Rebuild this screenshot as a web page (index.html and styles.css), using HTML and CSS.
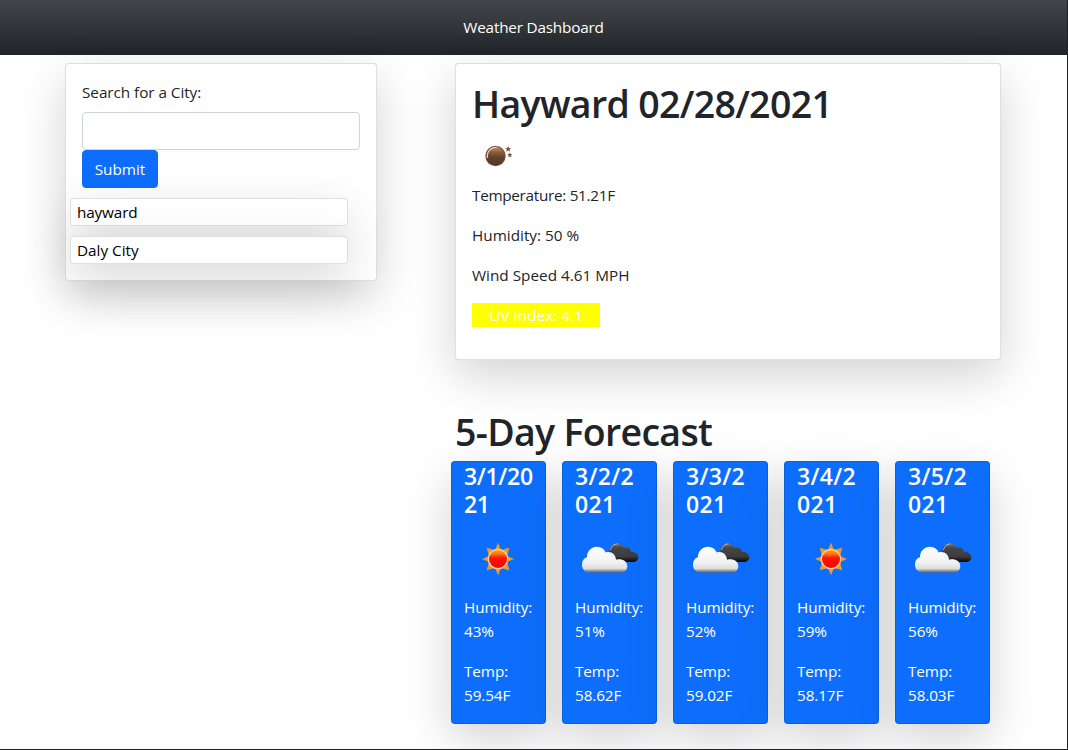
FILE: index.html
```html
<!DOCTYPE html>
<html lang="en">
<head>
<meta charset="utf-8">
<title>Weather Dashboard</title>
<link rel="stylesheet" href="styles.css">
</head>
<body>
<svg class="defs" width="0" height="0" aria-hidden="true">
  <defs>
    <linearGradient id="sunFill" x1="0" y1="0" x2="0" y2="1"><stop offset="0" stop-color="#ffa800"/><stop offset=".2" stop-color="#ff7a10"/><stop offset=".45" stop-color="#ff1200"/><stop offset="1" stop-color="#ff0000"/></linearGradient>
    <linearGradient id="whiteCloud" x1="0" y1="0" x2="0" y2="1"><stop offset="0" stop-color="#fff"/><stop offset=".6" stop-color="#f2f2f2"/><stop offset=".85" stop-color="#ddd"/><stop offset=".95" stop-color="#888"/><stop offset="1" stop-color="#666"/></linearGradient>
    <linearGradient id="darkCloud" x1="0" y1="0" x2="0" y2="1"><stop offset="0" stop-color="#707070"/><stop offset=".25" stop-color="#464646"/><stop offset=".7" stop-color="#3c3c3c"/><stop offset="1" stop-color="#050505"/></linearGradient>
    <linearGradient id="moonFill" x1="0" y1="0" x2="0" y2="1"><stop offset="0" stop-color="#c08e6c"/><stop offset=".3" stop-color="#8d5c3e"/><stop offset=".55" stop-color="#65432f"/><stop offset="1" stop-color="#523726"/></linearGradient>
    <symbol id="sun" viewBox="0 0 34 34">
      <path fill="#f39a1b" d="M17 .8 20 8 28.300 5.700 26 14 33 17 26 20 28.300 28.300 20 26 17 33.200 14 26 5.700 28.300 8 20 1 17 8 14 5.700 5.700 14 8Z"/>
      <circle cx="17" cy="17" r="10.300" fill="#f8d2b4"/>
      <circle cx="17" cy="17" r="9" fill="url(#sunFill)"/>
    </symbol>
    <symbol id="clouds" viewBox="0 0 58 32">
      <path fill="url(#darkCloud)" d="M28 12C28 5 31 1.500 35.500 1.500c4 0 6 1.800 7.300 4.500 4-1.500 6.700.6 7.300 4 4-.5 7.200 2.100 7.200 5.100 0 3.200-2.500 5-5.500 5H35Z"/>
      <path fill="none" stroke="#bbb" stroke-width="1" d="M29.500 8c1.200-4 3.500-6 7-6"/>
      <path fill="url(#whiteCloud)" d="M8.500 30.500C4 30.500 1 27 1 22.500c0-4 2-6.600 5-7.300C5.800 9 10.500 4.800 16 4.800c4.200 0 7 2.200 8.700 5.600 5.300-1.500 9.900 1.500 10.300 7.300 1-.3 1.700-.4 3-.4 4.500 0 8.300 2.500 8.300 6.900 0 3.700-2.500 6.300-6.500 6.300Z"/>
    </symbol>
    <symbol id="moon" viewBox="0 0 28 22">
      <circle cx="10.500" cy="11" r="10.200" fill="#76513a"/>
      <circle cx="10.500" cy="11" r="9.200" fill="url(#moonFill)"/>
      <path d="M2.500 13C1.500 6.500 6 2 12 2.200" fill="none" stroke="#ead7c9" stroke-width="1.100"/>
      <path fill="#7b523a" d="m23.200 1 .8 2 2.100.2-1.600 1.400.5 2.100-1.800-1.100-1.900 1.100.5-2.100-1.500-1.400 2.100-.2ZM24.800 7.500l.7 1.600 1.700.2-1.200 1.200.3 1.700-1.500-.8-1.500.8.3-1.700-1.200-1.200 1.700-.2Z"/>
    </symbol>
  </defs>
</svg>
<div class="page">
  <header class="navbar"><span>Weather Dashboard</span></header>
  <main class="layout">
    <aside class="card search">
      <form>
        <label for="city">Search for a City:</label>
        <input id="city" class="field" type="text">
        <button type="button" class="submit">Submit</button>
      </form>
      <div class="history">
        <div class="card past">hayward</div>
        <div class="card past">Daly City</div>
      </div>
    </aside>
    <div class="results">
      <section class="card current">
        <h1>Hayward 02/28/2021</h1>
        <svg class="moon"><use href="#moon"/></svg>
        <p class="temperature">Temperature: 51.21F</p>
        <p>Humidity: 50 %</p>
        <p>Wind Speed 4.61 MPH</p>
        <p class="uv">UV Index: 4.1</p>
      </section>
      <h1 class="forecast-title">5-Day Forecast</h1>
      <section class="forecast">
        <article class="card day"><h2 class="narrow">3/1/2021</h2><div class="icon"><svg class="sun"><use href="#sun"/></svg></div><p>Humidity: 43%</p><p>Temp: 59.54F</p></article>
        <article class="card day"><h2>3/2/2021</h2><div class="icon"><svg class="clouds"><use href="#clouds"/></svg></div><p>Humidity: 51%</p><p>Temp: 58.62F</p></article>
        <article class="card day"><h2>3/3/2021</h2><div class="icon"><svg class="clouds"><use href="#clouds"/></svg></div><p>Humidity: 52%</p><p>Temp: 59.02F</p></article>
        <article class="card day"><h2>3/4/2021</h2><div class="icon"><svg class="sun"><use href="#sun"/></svg></div><p>Humidity: 59%</p><p>Temp: 58.17F</p></article>
        <article class="card day"><h2>3/5/2021</h2><div class="icon"><svg class="clouds"><use href="#clouds"/></svg></div><p>Humidity: 56%</p><p>Temp: 58.03F</p></article>
      </section>
    </div>
  </main>
</div>
</body>
</html>
```
FILE: styles.css
```css
* { box-sizing: border-box; }
body { margin: 0; overflow: hidden; font: 15.3px/24px "Open Sans", "Noto Sans", sans-serif; color: #212529; }
h1, h2, p { margin: 0; }
.defs { display: block; }
.page { height: 750px; overflow: hidden; border-right: 1px solid #1d2126; border-bottom: 1px solid #1d2126; background: #fff; }
.navbar { height: 55px; padding-top: 15px; text-align: center; letter-spacing: -.2px; color: #fff; background: linear-gradient(180deg, rgba(255,255,255,.15), rgba(255,255,255,0)) #212529; }
.layout { display: flex; align-items: flex-start; padding: 8px 0 0 65px; }
.card { border: 1px solid rgba(0,0,0,.125); border-radius: 4px; background: #fff; background-clip: border-box; box-shadow: 0 16px 48px rgba(0,0,0,.175); }
.search { width: 312px; height: 218px; padding: 16px 16px 0; }
.search label { display: block; height: 24px; margin-bottom: 8px; letter-spacing: -.05px; }
.field { display: block; width: 278px; height: 38px; border: 1px solid #ced4da; border-radius: 4px; background: #fff; font: inherit; }
.submit { display: block; width: 76px; height: 38px; padding: 0; border: 1px solid #0d6efd; border-radius: 4px; background: #0d6efd; color: #fff; font: inherit; }
.history { display: flex; flex-direction: column; gap: 10px; margin: 10px 0 0 -12px; }
.past { width: 278px; height: 28px; padding: 1px 6px; color: #000; letter-spacing: -.15px; }
.past + .past { letter-spacing: 0; }
.results { margin-left: 78px; }
.current { width: 546px; height: 297px; padding: 16px; }
h1 { font-size: 37.5px; line-height: 48px; font-weight: 600; letter-spacing: -.68px; white-space: nowrap; }
.moon { display: block; width: 28px; height: 22px; margin: 17px 0 16px 13px; }
.current p { height: 24px; margin-bottom: 16px; white-space: nowrap; }
.current .temperature { letter-spacing: -.3px; }
.uv { width: 128px; text-align: center; background: #ff0; color: #fff; }
.forecast-title { margin: 48px 0 5px; }
.forecast { display: flex; gap: 16px; margin-left: -4px; }
.day { width: 95px; height: 263px; padding: 0 12px; background: #0d6efd; color: #fff; }
.day h2 { height: 56px; font-size: 23px; line-height: 28px; font-weight: 600; letter-spacing: .3px; word-break: break-all; }
.day .narrow { width: 71px; letter-spacing: -.3px; }
.day p { height: 48px; margin-bottom: 16px; width: 70px; letter-spacing: -.1px; }
.icon { height: 77px; padding-top: 24px; }
.sun { display: block; width: 34px; height: 34px; margin-left: 17px; }
.clouds { display: block; width: 58px; height: 32px; margin-left: 6px; }
```
